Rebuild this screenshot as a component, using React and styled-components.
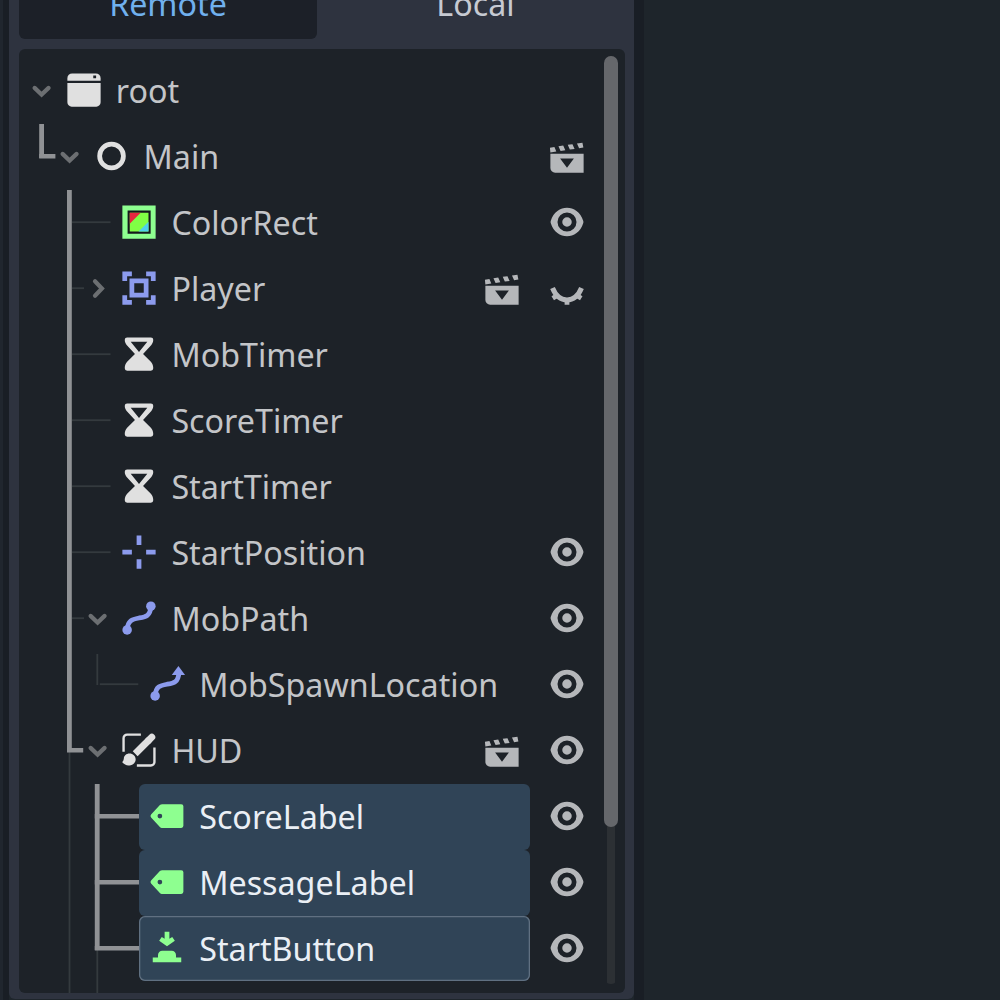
import React from 'react';
import styled, { createGlobalStyle } from 'styled-components';

const STEP = 27.8;
const ROW = 66;

const GlobalStyle = createGlobalStyle`
  * { box-sizing: border-box; }
  body { margin: 0; background: #1e252b; }
`;

const Screen = styled.div`
  width: 1000px;
  height: 1000px;
  overflow: hidden;
  display: flex;
  background: #1e252b;
  font-family: 'Noto Sans', 'Open Sans', sans-serif;
  font-size: 32.25px;
  color: #c3c5c8;
`;

const Gutter = styled.div`
  width: ${(p) => p.$width}px;
  flex: none;
  background: #191e25;
  border-left: ${(p) => (p.$edge ? '3px solid #20262e' : 'none')};
`;

const Dock = styled.section`
  width: 625px;
  height: 999px;
  flex: none;
  display: flex;
  flex-direction: column;
  padding: 0 9px 6px 10px;
  background: #2e333f;
  border-radius: 0 0 6px 6px;
`;

const TabBar = styled.nav`
  display: flex;
  flex: none;
  gap: 8px;
  height: 39px;
  margin-bottom: 10px;
`;

const Tab = styled.div`
  flex: none;
  width: 298px;
  height: 39px;
  display: flex;
  justify-content: center;
  line-height: 44px;
  padding-left: ${(p) => (p.$active ? 0 : 3)}px;
  border-radius: 0 0 6px 6px;
  background: ${(p) => (p.$active ? '#1c2028' : 'transparent')};
  color: ${(p) => (p.$active ? '#70b0ee' : '#c6cad2')};
`;

const TabLabel = styled.span`
  margin-top: -18px;
`;

const TreePanel = styled.div`
  flex: 1;
  min-height: 0;
  display: flex;
  overflow: hidden;
  padding: 7px 7px 0 9px;
  background: #1d2228;
  border-radius: 6px;
`;

const TreeList = styled.div`
  flex: 1;
  padding-top: 2px;
  margin-right: 5px;
`;

const Row = styled.div`
  display: flex;
  height: ${ROW}px;
`;

const GuideArt = styled.svg`
  flex: none;
  display: block;
  overflow: visible;
`;

const Arrow = styled.svg`
  flex: none;
  display: block;
  width: ${STEP}px;
  height: 64px;
`;

const NameCell = styled.div`
  flex: 1;
  height: ${(p) => (p.$focused ? 65 : 66)}px;
  display: flex;
  align-items: flex-start;
  padding: 13px 0 0 9px;
  margin-right: ${(p) => (p.$selected ? 4.5 : 0)}px;
  border-radius: 6px;
  background: ${(p) => (p.$selected ? '#304457' : 'transparent')};
  color: ${(p) => (p.$selected ? '#eaeff5' : 'inherit')};
  box-shadow: ${(p) => (p.$focused ? 'inset 0 0 0 1.3px #607081' : 'none')};
  white-space: nowrap;
`;

const Name = styled.span`
  margin: -2px 0 0 13px;
  line-height: 44px;
`;

const Actions = styled.div`
  flex: none;
  display: flex;
  height: 64px;
`;

const Action = styled.div`
  width: 64.5px;
  display: flex;
  align-items: center;
  justify-content: center;
  color: #b5b7ba;
`;

const IconSvg = styled.svg`
  width: 38px;
  height: 38px;
  flex: none;
  display: block;
`;

const ScrollTrack = styled.div`
  width: 14px;
  height: 928px;
  flex: none;
  border-radius: 7px;
  background: linear-gradient(90deg, transparent 3px, #2c3034 3px, #2c3034 11px, transparent 11px);
`;

const ScrollThumb = styled.div`
  height: 771px;
  border-radius: 7px;
  background: #65676b;
`;

const BLUE = '#8c9bed';
const GREEN = '#8eff90';
const WHITE = '#e0e0e0';

const icons = {
  window: (
    <g fill={WHITE}>
      <path d="M1 5v8.2A1.8 1.8 0 0 0 2.8 15h10.4a1.8 1.8 0 0 0 1.8-1.8V5z" />
      <path fillRule="evenodd" d="M3 1a2 2 0 0 0-2 2v1.1h14V3a2 2 0 0 0-2-2zm8.9.9h1.2v1.2h-1.2z" />
    </g>
  ),
  node: <circle cx="7.8" cy="8" r="5" fill="none" stroke={WHITE} strokeWidth="2" />,
  colorRect: (
    <g>
      <path fill={GREEN} d="M1 1h14v14H1z" />
      <path fill="#14191c" d="M3.2 3.2h9.7v9.7H3.2z" />
      <path fill="#80ff45" d="M4.1 4.1H12V12H4.1z" />
      <path fill="#e8263f" d="M4.1 4.1h4.6L4.1 8.7z" />
      <path fill="#4fd0ec" d="M12 7.9V12H7.8z" />
    </g>
  ),
  area: (
    <g fill="none" stroke={BLUE} strokeWidth="2">
      <path d="M2 5V2h3M11 2h3v3M14 11v3h-3M5 14H2v-3" />
      <path d="M5 5h6v6H5z" />
    </g>
  ),
  timer: (
    <path
      fill={WHITE}
      fillRule="evenodd"
      d="M3 1a1 1 0 0 0-1 1c0 .9.3 1.500.8 2.200L6.300 8 3 11.300c-.7.800-1 1.700-1 2.700a1 1 0 0 0 1 1h10a1 1 0 0 0 1-1c0-1-.3-1.900-1-2.700L9.700 8l3.500-3.800c.5-.7.8-1.300.8-2.200a1 1 0 0 0-1-1zM4.500 2.800h7L8 7.200z"
    />
  ),
  marker: <path fill={BLUE} d="M7 1h2v4H7zM7 11h2v4H7zM1 7h4v2H1zM11 7h4v2h-4z" />,
  path: (
    <g fill={BLUE}>
      <circle cx="3" cy="13" r="2" />
      <circle cx="13" cy="3" r="2" />
      <path d="M3 13C3.2 9 5.2 8.5 8 8s4.8-.8 5-5" fill="none" stroke={BLUE} strokeWidth="2" />
    </g>
  ),
  pathFollow: (
    <g fill={BLUE}>
      <circle cx="3" cy="13" r="2" />
      <path d="M10 4.2 12.8.4l2.8 3.8z" />
      <path d="M3 13C3.2 9 5.2 8.6 8 8.1s4.8-.8 5-4.8" fill="none" stroke={BLUE} strokeWidth="2" />
    </g>
  ),
  canvas: (
    <g fill="none" stroke={WHITE} strokeLinecap="butt">
      <path strokeWidth="1" d="M1.5 8.7V3A1.5 1.5 0 0 1 3 1.5h5.8M7.1 14.5H13a1.5 1.5 0 0 0 1.5-1.5V6.9" />
      <path strokeWidth="2.9" d="M6.4 9.6 12.2 3.8" />
      <path strokeWidth="2.9" strokeLinecap="round" d="M12 4l1.4-1.4" />
      <path
        fill={WHITE}
        stroke="none"
        d="M4 9.5c-1.4 0-2.3.9-2.4 2.2-.1.7-.3 1.1-.7 1.4 1 1.4 2.4 1.6 3.6 1.3 1.3-.4 2.1-1.2 2.1-2.4 0-1.5-1.2-2.5-2.600-2.500z"
      />
    </g>
  ),
  label: (
    <path
      fill={GREEN}
      fillRule="evenodd"
      d="M6 3c-.4 0-.7.1-1 .4L1.3 7.4a.9.9 0 0 0 0 1.2L5 12.6c.3.3.6.4 1 .4h8a.9.9 0 0 0 .9-.9V3.9A.9.9 0 0 0 14 3zM5 7a1 1 0 1 1 0 2 1 1 0 0 1 0-2z"
    />
  ),
  button: (
    <g fill={GREEN}>
      <path d="M7 1.2v2.9L5.8 3.4 4.7 4.9 8 7.3l3.3-2.4-1.1-1.5L9 4.1V1.2z" />
      <path d="M4.2 12v-1A1.8 1.8 0 0 1 6 9.2h4a1.8 1.8 0 0 1 1.8 1.8v1H14v2H2v-2z" />
    </g>
  ),
  eye: (
    <path
      fill="currentColor"
      fillRule="evenodd"
      d="M8 2C5.25 2 2.3 3.7 1.15 7.6a1.2 1.2 0 0 0 0 .8C2.3 12.3 5.25 14 8 14s5.7-1.7 6.85-5.6a1.2 1.2 0 0 0 0-.8C13.7 3.7 10.75 2 8 2zm0 2a4 4 0 0 1 0 8 4 4 0 0 1 0-8zm0 2a2 2 0 0 0 0 4 2 2 0 0 0 0-4z"
    />
  ),
  eyeClosed: (
    <g fill="none" stroke="currentColor">
      <path strokeWidth="2.1" d="M1.9 8C3.2 11.2 5.4 13 8 13s4.800-1.800 6.100-5" />
      <path strokeWidth="2" d="M8 13v2M4.3 10.9l-2.3 1.4M11.7 10.9l2.300 1.400" />
    </g>
  ),
  clapper: (
    <g fill="currentColor">
      <path fillRule="evenodd" d="M1 7.1h14V15H3a2 2 0 0 1-2-2zM5.1 9 8 12.9 10.9 9z" />
      <path d="M.8 4.5l1.900-.3.800 1.900L1 6.500zM4.400 3.900l2-.3.900 2-2 .3zM8.300 3.300l2-.3.900 2-2 .3zM12.200 2.700l2.300-.3.400 2-1.800.3z" />
    </g>
  ),
};

const Icon = ({ name }) => <IconSvg viewBox="0 0 16 16">{icons[name]}</IconSvg>;

const STRONG = '#909295';
const FAINT = '#343a3e';

// Line x positions are relative to the left edge of the list (28px into the page).
const lineX = (level) => 13.6 + STEP * (level - 1);

// guide: { v: vertical runs [level, strong, from, to], h: horizontal runs [level, strong, length] }
function Guides({ level, guide, height = ROW }) {
  return (
    <GuideArt width={STEP * level} height={height}>
      {(guide.v || []).map(([lv, strong, from, to], i) => (
        <rect
          key={`v${i}`}
          x={lineX(lv) - (strong ? 2.4 : 0.8)}
          y={from}
          width={strong ? 4.8 : 1.8}
          height={to - from}
          fill={strong ? STRONG : FAINT}
        />
      ))}
      {(guide.h || []).map(([lv, strong, length], i) => (
        <rect
          key={`h${i}`}
          x={lineX(lv) + (strong ? -2.4 : 2.6)}
          y={strong ? 30 : 31.3}
          width={length}
          height={strong ? 4.5 : 1.8}
          fill={strong ? STRONG : FAINT}
        />
      ))}
    </GuideArt>
  );
}

const trunk = [2, true, 0, 66];
const hudTail = [2, false, 0, 66];
const leaf = { v: [trunk], h: [[2, false, 38.5]] };
const parent = { v: [trunk], h: [[2, false, 12]] };

const nodes = [
  { name: 'root', icon: 'window', level: 0, arrow: 'open', guide: {} },
  { name: 'Main', icon: 'node', level: 1, arrow: 'open', actions: ['clapper'], guide: { v: [[1, true, 0, 34]], h: [[1, true, 16.2]] } },
  { name: 'ColorRect', icon: 'colorRect', level: 2, actions: ['eye'], guide: leaf },
  { name: 'Player', icon: 'area', level: 2, arrow: 'closed', actions: ['clapper', 'eyeClosed'], guide: parent },
  { name: 'MobTimer', icon: 'timer', level: 2, guide: leaf },
  { name: 'ScoreTimer', icon: 'timer', level: 2, guide: leaf },
  { name: 'StartTimer', icon: 'timer', level: 2, guide: leaf },
  { name: 'StartPosition', icon: 'marker', level: 2, actions: ['eye'], guide: leaf },
  { name: 'MobPath', icon: 'path', level: 2, arrow: 'open', actions: ['eye'], guide: parent },
  { name: 'MobSpawnLocation', icon: 'pathFollow', level: 3, actions: ['eye'], guide: { v: [trunk, [3, false, 2, 33]], h: [[3, false, 38.5]] } },
  { name: 'HUD', icon: 'canvas', level: 2, arrow: 'open', actions: ['clapper', 'eye'], guide: { v: [[2, false, 34, 66], [2, true, 0, 34]], h: [[2, true, 16.2]] } },
  { name: 'ScoreLabel', icon: 'label', level: 3, selected: true, actions: ['eye'], guide: { v: [hudTail, [3, true, 0, 66]], h: [[3, true, 44.3]] } },
  { name: 'MessageLabel', icon: 'label', level: 3, selected: true, actions: ['eye'], guide: { v: [hudTail, [3, true, 0, 66]], h: [[3, true, 44.3]] } },
  { name: 'StartButton', icon: 'button', level: 3, selected: true, focused: true, actions: ['eye'], guide: { v: [hudTail, [3, false, 34, 66], [3, true, 0, 34]], h: [[3, true, 44.3]] } },
];

const arrows = {
  open: 'M6.6 29.9 13.6 36.5 20.6 29.9',
  closed: 'M11 25.3 17.9 32.5 11 39.7',
};

function TreeRow({ node }) {
  return (
    <Row>
      <Guides level={node.level} guide={node.guide} />
      <Arrow>
        {node.arrow && <path d={arrows[node.arrow]} fill="none" stroke="#6c6f72" strokeWidth="4.2" strokeLinecap="round" />}
      </Arrow>
      <NameCell $selected={node.selected} $focused={node.focused}>
        <Icon name={node.icon} />
        <Name>{node.name}</Name>
      </NameCell>
      <Actions>
        {(node.actions || []).map((a) => (
          <Action key={a}>
            <Icon name={a} />
          </Action>
        ))}
      </Actions>
    </Row>
  );
}

export default function App() {
  return (
    <>
      <GlobalStyle />
      <Screen>
        <Gutter $width={9} $edge />
        <Dock>
          <TabBar>
            <Tab $active>
              <TabLabel>Remote</TabLabel>
            </Tab>
            <Tab>
              <TabLabel>Local</TabLabel>
            </Tab>
          </TabBar>
          <TreePanel>
            <TreeList>
              {nodes.map((n) => (
                <TreeRow key={n.name} node={n} />
              ))}
              <Guides level={3} height={12} guide={{ v: [[2, false, 0, 12], [3, false, 0, 12]] }} />
            </TreeList>
            <ScrollTrack>
              <ScrollThumb />
            </ScrollTrack>
          </TreePanel>
        </Dock>
        <Gutter $width={10} />
      </Screen>
    </>
  );
}
